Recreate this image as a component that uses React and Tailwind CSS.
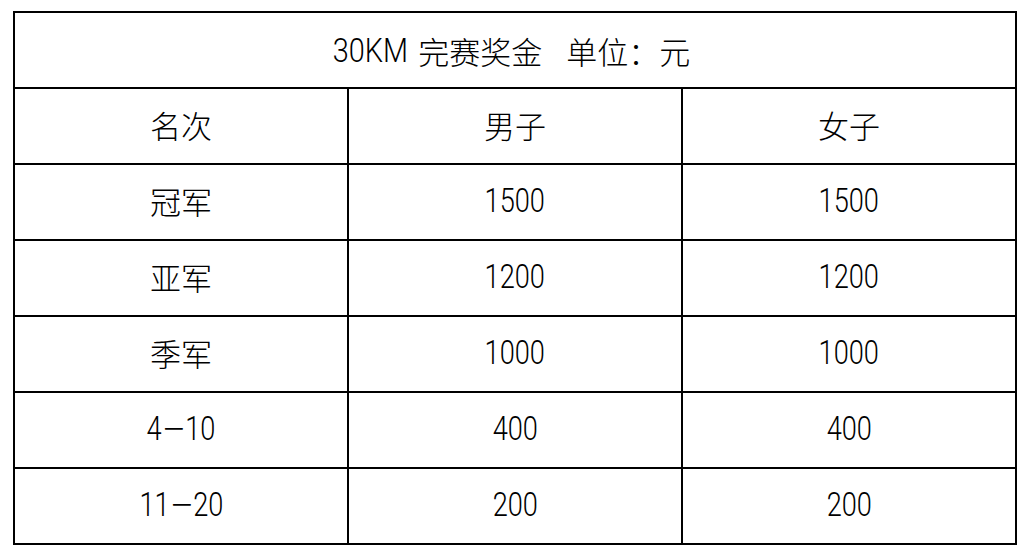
import React from "react";

const latin = { fontFamily: '"Roboto Light", "Roboto Condensed Light", Roboto, "Liberation Sans", sans-serif' };
const cjk = { fontFamily: '"Noto Sans CJK SC Light", "Noto Sans CJK SC DemiLight", "Noto Sans CJK SC", "Noto Sans", sans-serif' };

const rows = [
  ["冠军", "1500", "1500"],
  ["亚军", "1200", "1200"],
  ["季军", "1000", "1000"],
  ["4-10", "400", "400"],
  ["11-20", "200", "200"],
];

function isCjk(s) {
  return /[\u4e00-\u9fff]/.test(s);
}

function Latin({ text }) {
  const parts = text.split("-");
  if (parts.length === 2) {
    return (
      <>
        {parts[0]}
        <span className="inline-block scale-x-[1.6] mx-[5px] translate-y-[1px]">−</span>
        {parts[1]}
      </>
    );
  }
  return text;
}

function Cell({ text, last }) {
  const c = isCjk(text);
  return (
    <div
      className={
        "flex items-center justify-center text-black " +
        (last ? "" : "border-r-2 border-black")
      }
    >
      {c ? (
        <span className="text-[31px] font-extralight leading-none mt-[-3px]" style={cjk}>
          {text}
        </span>
      ) : (
        <span
          className="inline-block text-[34px] font-light leading-none scale-x-[0.8] mt-[-5px]"
          style={latin}
        >
          <Latin text={text} />
        </span>
      )}
    </div>
  );
}

export default function App() {
  return (
    <div className="w-[1024px] h-[556px] bg-white pt-[11px] pl-[13px]">
      <div className="w-[1004px] border-2 border-black flex flex-col">
        <div className="h-[74px] flex items-center justify-center text-black pr-[14px]">
          <span
            className="inline-block text-[34px] font-light leading-none scale-x-[0.85] mr-[-7px]"
            style={latin}
          >
            30KM
          </span>
          <span className="text-[31px] font-extralight leading-none ml-[11px]" style={cjk}>完赛奖金</span>
          <span className="text-[31px] font-extralight leading-none ml-[24px]" style={cjk}>单位：元</span>
        </div>
        {[["名次", "男子", "女子"], ...rows].map((r, i) => (
          <div
            key={i}
            className="grid grid-cols-[334px_334px_332px] h-[76px] border-t-2 border-black"
          >
            <Cell text={r[0]} />
            <Cell text={r[1]} />
            <Cell text={r[2]} last />
          </div>
        ))}
      </div>
    </div>
  );
}
